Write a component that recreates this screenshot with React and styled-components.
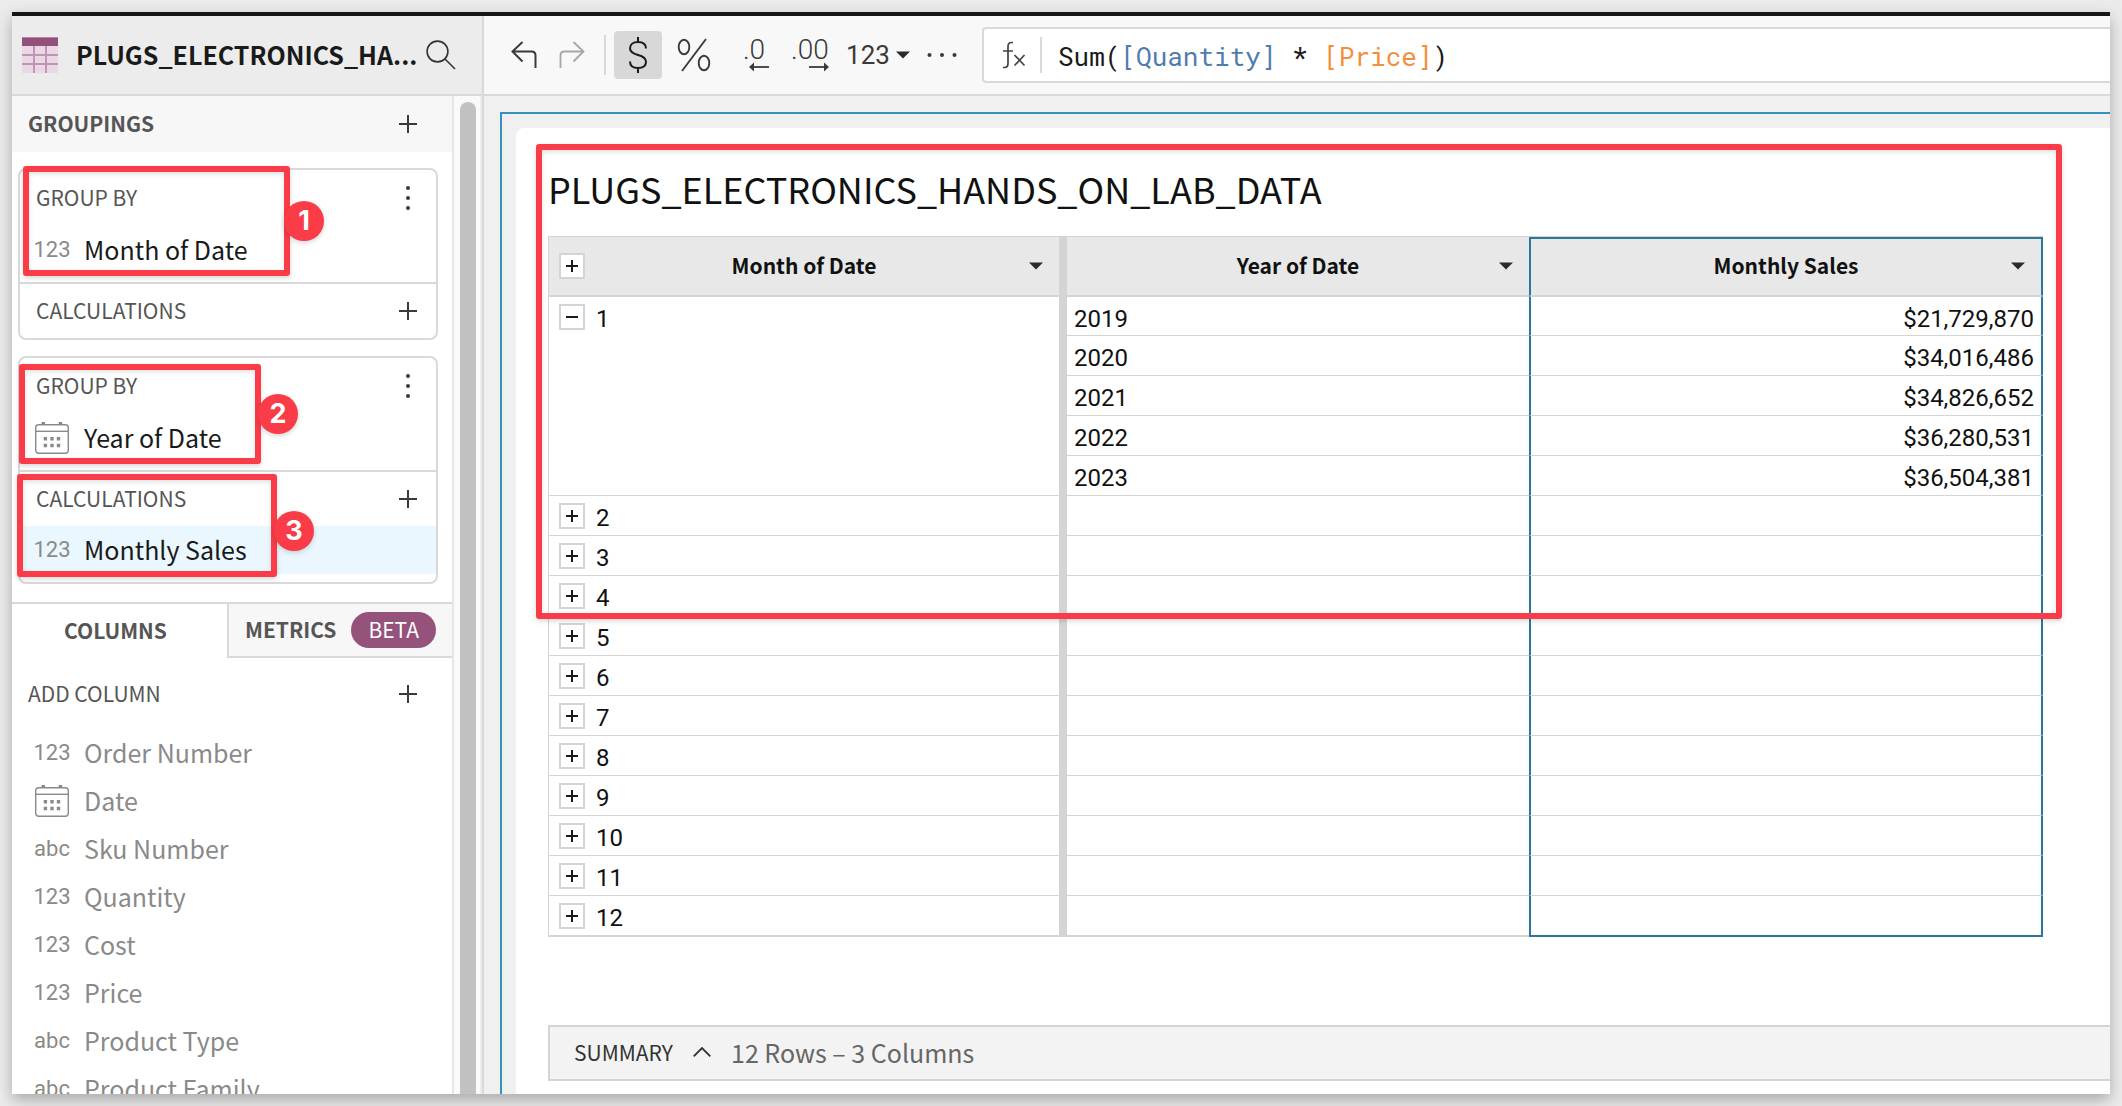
import React from "react";
import styled, { createGlobalStyle } from "styled-components";

const sans = `"Noto Sans CJK JP", "Noto Sans CJK SC", "Noto Sans", sans-serif`;
const numeric = `Roboto, "Liberation Sans", sans-serif`;
const mono = `"Roboto Mono", "Liberation Mono", monospace`;
const line = "#d9d9d9";
const accent = "#92517a";
const callout = "#f93c47";
const selection = "#2a7799";

const GlobalStyle = createGlobalStyle`
  *, *::before, *::after { box-sizing: border-box; }
  body { margin: 0; background: #ebebeb; font-family: ${sans}; color: #1a1a1a; }
  button { margin: 0; padding: 0; border: 0; background: none; color: inherit; font: inherit; }
  h1, h2, h3, ul { margin: 0; padding: 0; font: inherit; list-style: none; }
  svg { display: block; flex: none; }
`;

const Page = styled.div`
  height: 100vh;
  padding: 12px;
  overflow: hidden;
`;

const Frame = styled.div`
  display: flex;
  height: 100%;
  border-top: 4px solid #161616;
  background: #fff;
  box-shadow: 0 6px 14px rgba(0, 0, 0, 0.28);
`;

/* Sidebar */

const Sidebar = styled.aside`
  display: flex;
  flex-direction: column;
  flex: none;
  width: 472px;
  border-right: 2px solid ${line};
  overflow: hidden;
`;

const SidebarHeader = styled.header`
  display: flex;
  align-items: center;
  flex: none;
  gap: 18px;
  height: 80px;
  padding-left: 10px;
  border-bottom: 2px solid ${line};
  background: #ececec;
`;

const SourceName = styled.h2`
  width: 332px;
  padding-bottom: 2px;
  font-size: 25px;
  font-weight: 600;
  line-height: 36px;
  white-space: nowrap;
`;

const SidebarBody = styled.div`
  display: flex;
  flex: 1;
  min-height: 0;
`;

const SidebarContent = styled.div`
  flex: 1;
  min-width: 0;
  overflow: hidden;
  border-right: 2px solid #e6e6e6;
`;

const ScrollTrack = styled.div`
  flex: none;
  width: 28px;
  padding: 6px 4px 0 6px;
  border-right: 2px solid #ebebeb;
  background: #fafafa;
`;

const ScrollThumb = styled.div`
  height: 100%;
  border-radius: 8px 8px 0 0;
  background: #c1c1c1;
`;

const SectionBar = styled.div`
  display: flex;
  align-items: center;
  justify-content: space-between;
  height: 56px;
  padding: 0 35px 0 16px;
  margin-top: ${(p) => (p.$spaced ? "8px" : "0")};
  background: ${(p) => (p.$shaded ? "#f7f7f7" : "transparent")};
`;

const SectionTitle = styled.h3`
  padding-bottom: 2px;
  color: #555;
  font-size: 21px;
  font-weight: ${(p) => (p.$strong ? 600 : 400)};
  line-height: 32px;
`;

const Groups = styled.div`
  display: grid;
  gap: 16px;
  padding: 16px 14px 18px 6px;
`;

const Card = styled.section`
  position: relative;
  border: 2px solid ${line};
  border-radius: 8px;
`;

const CardPart = styled.div`
  padding-bottom: ${(p) => (p.$filled ? "8px" : "0")};

  & + & {
    border-top: 2px solid ${line};
  }
`;

const CardHeading = styled.div`
  display: flex;
  align-items: center;
  justify-content: space-between;
  height: ${(p) => (p.$tall ? "56px" : "54px")};
  padding: 0 19px 0 16px;
`;

const ColumnList = styled.ul`
  padding-top: 7px;
`;

const Field = styled.li`
  display: flex;
  align-items: center;
  gap: 14px;
  height: 48px;
  padding: 0 0 2px ${(p) => (p.$inset ? "14px" : "22px")};
  background: ${(p) => (p.$selected ? "#ebf7fe" : "transparent")};
  color: ${(p) => (p.$muted ? "#8a8a8a" : "#1a1a1a")};
  font-size: 25px;
  line-height: 36px;
`;

const TypeMark = styled.span`
  display: flex;
  justify-content: center;
  flex: none;
  width: 36px;
  padding-top: 2px;
  color: #8a8a8a;
  font-family: ${numeric};
  font-size: 22px;
  line-height: 28px;
`;

const IconButton = styled.button`
  display: flex;
  align-items: center;
  justify-content: center;
  flex: none;
  width: ${(p) => p.$width || 18}px;
  height: 32px;
  color: #3a3a3a;
`;

const Tabs = styled.div`
  display: flex;
  height: 56px;
  border-top: 2px solid ${line};
`;

const Tab = styled.button`
  display: flex;
  align-items: center;
  justify-content: ${(p) => (p.$active ? "center" : "space-between")};
  flex: ${(p) => (p.$active ? "1" : "none")};
  width: ${(p) => (p.$active ? "auto" : "225px")};
  border: solid ${line};
  border-width: ${(p) => (p.$active ? "0" : "0 0 2px 2px")};
  padding: ${(p) => (p.$active ? "0 8px 0 0" : "0 16px")};
  background: ${(p) => (p.$active ? "#fff" : "#f7f7f7")};
  color: #555;
  font-size: 21px;
  font-weight: 600;
  line-height: 32px;
`;

const TabLabel = styled.span`
  padding-bottom: 2px;
`;

const Pill = styled.span`
  height: 36px;
  padding: 0 17px;
  border-radius: 18px;
  background: #95527b;
  color: #fff;
  font-weight: 400;
  line-height: 34px;
`;

/* Numbered callouts that sit over the content */

const CalloutBox = styled.div`
  position: absolute;
  z-index: 1;
  left: ${(p) => p.$left}px;
  top: ${(p) => p.$top}px;
  right: ${(p) => (p.$right === undefined ? "auto" : `${p.$right}px`)};
  width: ${(p) => (p.$width === undefined ? "auto" : `${p.$width}px`)};
  height: ${(p) => p.$height}px;
  border: 6px solid ${callout};
  border-radius: 3px;
  box-shadow: 0 2px 5px rgba(0, 0, 0, 0.16), inset 0 2px 5px rgba(0, 0, 0, 0.12);
  pointer-events: none;
`;

const CalloutBadge = styled.span`
  position: absolute;
  z-index: 1;
  left: ${(p) => p.$left}px;
  top: ${(p) => p.$top}px;
  width: 40px;
  height: 40px;
  border-radius: 50%;
  background: ${callout};
  box-shadow: 0 2px 5px rgba(0, 0, 0, 0.16);
  color: #fff;
  font-family: Inter, "Liberation Sans", sans-serif;
  font-size: 27px;
  font-weight: 700;
  line-height: 39px;
  text-align: center;
`;

/* Workspace */

const Workspace = styled.main`
  display: flex;
  flex-direction: column;
  flex: 1;
  min-width: 0;
  overflow: hidden;
`;

const Toolbar = styled.div`
  display: flex;
  align-items: center;
  flex: none;
  height: 80px;
  padding-left: 24px;
  border-bottom: 2px solid ${line};
  background: #f8f8f8;
`;

const ToolButton = styled.button`
  display: flex;
  align-items: center;
  justify-content: center;
  flex: none;
  gap: 6px;
  width: ${(p) => p.$width || 48}px;
  height: 48px;
  border-radius: 4px;
  background: ${(p) => (p.$active ? "#d8d8d8" : "transparent")};
  color: ${(p) => (p.$faded ? "#a6a6a6" : "#3a3a3a")};
  font-family: ${numeric};
  font-size: 26px;
  line-height: 32px;
`;

const ToolDivider = styled.div`
  flex: none;
  width: 2px;
  height: 40px;
  margin-right: 8px;
  background: ${line};
`;

const Decimals = styled.span`
  display: flex;
  flex-direction: column;
  height: 36px;
  font-size: 28px;
  font-weight: 300;
  line-height: 25px;

  & > svg {
    margin-left: ${(p) => (p.$wide ? "18px" : "10px")};
  }
`;

const FormulaBar = styled.div`
  display: flex;
  align-items: center;
  flex: 1;
  min-width: 0;
  height: 56px;
  margin-left: 16px;
  padding-left: 18px;
  border: solid ${line};
  border-width: 2px 0 2px 2px;
  border-radius: 4px 0 0 4px;
  background: #fff;
`;

const FormulaDivider = styled.div`
  flex: none;
  width: 2px;
  height: 36px;
  margin: 0 16px 0 14px;
  background: ${line};
`;

const Formula = styled.div`
  flex: 1;
  min-width: 0;
  padding-top: 2px;
  font-family: ${mono};
  font-size: 26px;
  line-height: 36px;
  white-space: pre;
  outline: none;
`;

const Reference = styled.span`
  color: ${(p) => p.$color};
`;

const Canvas = styled.div`
  display: flex;
  flex: 1;
  min-height: 0;
  padding: 16px 0 0 16px;
  background: #f0f0f0;
`;

const SelectedElement = styled.div`
  display: flex;
  flex: 1;
  min-width: 0;
  padding: 14px 0 0 14px;
  border: solid #3592bf;
  border-width: 2px 0 0 2px;
`;

const Panel = styled.section`
  position: relative;
  display: flex;
  flex-direction: column;
  flex: 1;
  min-width: 0;
  padding: 36px 0 13px 32px;
  border-radius: 8px 0 0 0;
  background: #fff;
`;

const PanelTitle = styled.h1`
  height: 72px;
  color: #111;
  font-size: 36px;
  line-height: 48px;
  white-space: nowrap;
`;

const TableArea = styled.div`
  padding-right: 67px;
`;

const DataTable = styled.table`
  width: 100%;
  table-layout: fixed;
  border: solid #d4d4d4;
  border-width: 1px 0 0 1px;
  border-spacing: 0;
  color: #111;
`;

const Column = styled.col`
  width: ${(p) => p.$width};
`;

const edges = (p) =>
  p.$kind === "year"
    ? "border-left: 8px solid #d4d4d4;"
    : p.$kind === "sales"
      ? `border-left: 2px solid ${selection}; border-right: 2px solid ${selection};`
      : "";

const HeadCell = styled.th`
  height: 59px;
  padding: ${(p) => (p.$kind === "sales" ? "0 0 2px" : "0")};
  border-bottom: 1px solid #d4d4d4;
  ${edges}
  ${(p) => (p.$kind === "sales" ? `border-top: 2px solid ${selection};` : "")}
  background: #e8e8e8;
  font-size: 21px;
  font-weight: 600;
  line-height: 32px;
`;

const HeadContent = styled.div`
  display: grid;
  grid-template-columns: 36px 1fr 36px;
  align-items: center;
  padding: 0 16px 0 10px;

  & > :last-child {
    justify-self: end;
  }
`;

const HeadLabel = styled.span`
  grid-column: 2;
  padding: 0 0 2px 6px;
  text-align: center;
`;

const Cell = styled.td`
  height: 40px;
  padding: 0 7px;
  border-bottom: 1px solid #d4d4d4;
  ${edges}
  font-family: ${numeric};
  font-size: 24px;
  line-height: 32px;
  text-align: ${(p) => (p.$kind === "sales" ? "right" : "left")};
  vertical-align: top;

  tbody tr:first-child & {
    border-top: 1px solid #d4d4d4;
  }

  tbody tr:last-child & {
    height: 41px;
    border-bottom: 2px solid ${(p) => (p.$kind === "sales" ? selection : "#d4d4d4")};
  }
`;

const CellText = styled.div`
  display: flex;
  align-items: center;
  justify-content: ${(p) => (p.$end ? "flex-end" : "flex-start")};
  gap: 11px;
  height: 38px;
  padding: 2px 0 0 ${(p) => (p.$group ? "3px" : "0")};
`;

const CellValue = styled.span`
  padding-top: 4px;
`;

const ExpandButton = styled.button`
  display: flex;
  align-items: center;
  justify-content: center;
  flex: none;
  width: 26px;
  height: 26px;
  border: 2px solid #d4d4d4;
  background: #fff;
  color: #1a1a1a;
`;

const Summary = styled.footer`
  display: flex;
  align-items: center;
  flex: none;
  gap: 20px;
  height: 56px;
  margin-top: auto;
  padding: 0 0 2px 24px;
  border: solid #d4d4d4;
  border-width: 2px 0 2px 2px;
  background: #f3f3f3;
`;

const SummaryToggle = styled.button`
  display: flex;
  align-items: center;
  gap: 20px;
  color: #333;
  font-size: 21px;
  line-height: 32px;
`;

const SummaryText = styled.span`
  color: #666;
  font-size: 25px;
  line-height: 36px;
`;

/* Icons */

const TableIcon = () => (
  <svg width="36" height="36" viewBox="0 0 36 36">
    <rect width="36" height="36" fill="#ead9e4" />
    <path d="M12 9v27M24 9v27M0 18h36M0 27h36" stroke="#c094b4" strokeWidth="2" />
    <rect width="36" height="9" fill={accent} />
    <path d="M0 .5h36" stroke="#b483a3" />
  </svg>
);

const SearchIcon = () => (
  <svg width="30" height="30" viewBox="0 0 30 30" fill="none" stroke="#333" strokeWidth="1.6">
    <circle cx="11.5" cy="11.5" r="10.4" />
    <path d="M19 19l10 10" />
  </svg>
);

const PlusIcon = ({ size = 18 }) => (
  <svg width={size} height={size} viewBox={`0 0 ${size} ${size}`} stroke="currentColor" strokeWidth="2">
    <path d={`M0 ${size / 2}h${size}M${size / 2} 0v${size}`} />
  </svg>
);

const MinusIcon = () => (
  <svg width="12" height="12" viewBox="0 0 12 12" stroke="currentColor" strokeWidth="2">
    <path d="M0 6h12" />
  </svg>
);

const KebabIcon = () => (
  <svg width="4" height="24" viewBox="0 0 4 24" fill="currentColor">
    <circle cx="2" cy="2" r="2" />
    <circle cx="2" cy="12" r="2" />
    <circle cx="2" cy="22" r="2" />
  </svg>
);

const CalendarIcon = () => (
  <svg width="34" height="32" viewBox="0 0 34 32" fill="none" stroke="#8a8a8a">
    <rect x=".7" y="2.7" width="32.6" height="28.6" rx="3" strokeWidth="1.4" />
    <path d="M1 9.3h32" strokeWidth="1.4" />
    <path d="M6.5 1.3h3.5M23.7 1.3h3.5" strokeWidth="2.6" />
    <path
      d="M8.7 16.8h3.4M15.3 16.8h3.4M21.8 16.8h3.4M8.7 23.5h3.4M15.3 23.5h3.4M21.8 23.5h3.4"
      strokeWidth="3.4"
    />
  </svg>
);

const UndoIcon = ({ flip }) => (
  <svg
    width="26"
    height="28"
    viewBox="0 0 26 28"
    fill="none"
    stroke="currentColor"
    strokeWidth={flip ? 1.8 : 2}
    transform={flip ? "scale(-1 1)" : undefined}
  >
    <path d="M11.5 1L1.5 10.500L11.5 20.500M1.5 10.500H20.5Q24.5 10.500 24.5 14.500V27" />
  </svg>
);

const CurrencyIcon = () => (
  <svg width="20" height="36" viewBox="0 0 20 36" fill="none" stroke="#1a1a1a" strokeWidth="2">
    <path d="M10 0v5M10 31v5M18 11.500C18 7 15 5 10 5S2 7.500 2 11.300C2 15.500 5.500 16.800 10 18S18 20.700 18 24.800C18 29 15 31 10 31S2 29 2 24.500" />
  </svg>
);

const PercentIcon = () => (
  <svg width="34" height="34" viewBox="0 0 34 34" fill="none" stroke="currentColor" strokeWidth="1.9">
    <ellipse cx="7" cy="9" rx="5.3" ry="7.3" />
    <ellipse cx="27" cy="25" rx="5.3" ry="7.3" />
    <path d="M29 1L5 33" />
  </svg>
);

const ShiftArrow = ({ right }) => (
  <svg width="20" height="10" viewBox="0 0 20 10" transform={right ? "scale(-1 1)" : undefined}>
    <path d="M4 5h16" stroke="currentColor" strokeWidth="1.8" />
    <path d="M0 5l5-4.500v9z" fill="currentColor" />
  </svg>
);

const Caret = () => (
  <svg width="14" height="8" viewBox="0 0 14 8" fill="#2a2a2a">
    <path d="M0 .5h14L7 7.500z" />
  </svg>
);

const MoreIcon = () => (
  <svg width="30" height="4" viewBox="0 0 30 4" fill="currentColor">
    <circle cx="2.500" cy="2" r="2" />
    <circle cx="15" cy="2" r="2" />
    <circle cx="27.500" cy="2" r="2" />
  </svg>
);

const FunctionIcon = () => (
  <svg width="24" height="28" viewBox="0 0 24 28" fill="none" stroke="#444" strokeWidth="1.7">
    <path d="M11 1.500H9.500Q6 1.500 6 5.500V22.500Q6 26.500 2.500 26.500H1M1 10H11" />
    <path d="M12.500 14L22.500 24.500M22.500 14L12.500 24.500" />
  </svg>
);

const ChevronUp = () => (
  <svg width="18" height="10" viewBox="0 0 18 10" fill="none" stroke="#333" strokeWidth="1.8">
    <path d="M.7 9.300L9 1L17.300 9.300" />
  </svg>
);

/* Data */

const columns = [
  ["123", "Order Number"],
  ["date", "Date"],
  ["abc", "Sku Number"],
  ["123", "Quantity"],
  ["123", "Cost"],
  ["123", "Price"],
  ["abc", "Product Type"],
  ["abc", "Product Family"],
];

const years = [
  ["2019", "$21,729,870"],
  ["2020", "$34,016,486"],
  ["2021", "$34,826,652"],
  ["2022", "$36,280,531"],
  ["2023", "$36,504,381"],
];

const months = [2, 3, 4, 5, 6, 7, 8, 9, 10, 11, 12];

const FieldRow = ({ type, name, ...rest }) => (
  <Field {...rest}>
    <TypeMark>{type === "date" ? <CalendarIcon /> : type}</TypeMark>
    {name}
  </Field>
);

const Group = ({ field, calculation, children }) => (
  <Card>
    <CardPart $filled>
      <CardHeading $tall>
        <SectionTitle>GROUP BY</SectionTitle>
        <IconButton aria-label="Grouping options">
          <KebabIcon />
        </IconButton>
      </CardHeading>
      <ul>
        <FieldRow type={field[0]} name={field[1]} $inset />
      </ul>
    </CardPart>
    <CardPart $filled={Boolean(calculation)}>
      <CardHeading>
        <SectionTitle>CALCULATIONS</SectionTitle>
        <IconButton aria-label="Add calculation">
          <PlusIcon />
        </IconButton>
      </CardHeading>
      {calculation && (
        <ul>
          <FieldRow type={calculation[0]} name={calculation[1]} $inset $selected />
        </ul>
      )}
    </CardPart>
    {children}
  </Card>
);

const MonthCell = ({ month, open, rowSpan }) => (
  <Cell $kind="month" rowSpan={rowSpan}>
    <CellText $group>
      <ExpandButton aria-label={open ? "Collapse" : "Expand"}>
        {open ? <MinusIcon /> : <PlusIcon size={12} />}
      </ExpandButton>
      <CellValue>{month}</CellValue>
    </CellText>
  </Cell>
);

const Heading = ({ kind, label, expandable }) => (
  <HeadCell $kind={kind} scope="col">
    <HeadContent>
      {expandable && (
        <ExpandButton aria-label="Expand all">
          <PlusIcon size={12} />
        </ExpandButton>
      )}
      <HeadLabel>{label}</HeadLabel>
      <IconButton $width={14} aria-label={`${label} menu`}>
        <Caret />
      </IconButton>
    </HeadContent>
  </HeadCell>
);

export default function App() {
  return (
    <Page lang="en">
      <GlobalStyle />
      <Frame>
        <Sidebar>
          <SidebarHeader>
            <TableIcon />
            <SourceName>PLUGS_ELECTRONICS_HA...</SourceName>
            <IconButton $width={30} aria-label="Search">
              <SearchIcon />
            </IconButton>
          </SidebarHeader>
          <SidebarBody>
            <SidebarContent>
              <SectionBar $shaded>
                <SectionTitle $strong>GROUPINGS</SectionTitle>
                <IconButton aria-label="Add grouping">
                  <PlusIcon />
                </IconButton>
              </SectionBar>
              <Groups>
                <Group field={["123", "Month of Date"]}>
                  <CalloutBox $left={3} $top={-4} $width={267} $height={110} />
                  <CalloutBadge $left={264} $top={31}>1</CalloutBadge>
                </Group>
                <Group field={["date", "Year of Date"]} calculation={["123", "Monthly Sales"]}>
                  <CalloutBox $left={-1} $top={6} $width={242} $height={100} />
                  <CalloutBadge $left={238} $top={36}>2</CalloutBadge>
                  <CalloutBox $left={-3} $top={116} $width={260} $height={103} />
                  <CalloutBadge $left={254} $top={153}>3</CalloutBadge>
                </Group>
              </Groups>
              <Tabs role="tablist">
                <Tab role="tab" aria-selected="true" $active>
                  <TabLabel>COLUMNS</TabLabel>
                </Tab>
                <Tab role="tab" aria-selected="false">
                  <TabLabel>METRICS</TabLabel>
                  <Pill>BETA</Pill>
                </Tab>
              </Tabs>
              <SectionBar $spaced>
                <SectionTitle>ADD COLUMN</SectionTitle>
                <IconButton aria-label="Add column">
                  <PlusIcon />
                </IconButton>
              </SectionBar>
              <ColumnList>
                {columns.map(([type, name]) => (
                  <FieldRow key={name} type={type} name={name} $muted />
                ))}
              </ColumnList>
            </SidebarContent>
            <ScrollTrack>
              <ScrollThumb />
            </ScrollTrack>
          </SidebarBody>
        </Sidebar>

        <Workspace>
          <Toolbar>
            <ToolButton $width={32} aria-label="Undo">
              <UndoIcon />
            </ToolButton>
            <ToolButton $width={64} $faded aria-label="Redo">
              <UndoIcon flip />
            </ToolButton>
            <ToolDivider />
            <ToolButton $active aria-label="Format as currency">
              <CurrencyIcon />
            </ToolButton>
            <ToolButton $width={64} aria-label="Format as percent">
              <PercentIcon />
            </ToolButton>
            <ToolButton $width={56} aria-label="Fewer decimal places">
              <Decimals>
                .0
                <ShiftArrow />
              </Decimals>
            </ToolButton>
            <ToolButton $width={56} aria-label="More decimal places">
              <Decimals $wide>
                .00
                <ShiftArrow right />
              </Decimals>
            </ToolButton>
            <ToolButton $width={80} aria-label="Number format">
              123
              <Caret />
            </ToolButton>
            <ToolButton aria-label="More">
              <MoreIcon />
            </ToolButton>
            <FormulaBar>
              <FunctionIcon />
              <FormulaDivider />
              <Formula role="textbox" aria-label="Formula" contentEditable suppressContentEditableWarning spellCheck={false}>
                Sum(<Reference $color="#4f7cac">[Quantity]</Reference>
                {" * "}
                <Reference $color="#f28e3c">[Price]</Reference>)
              </Formula>
            </FormulaBar>
          </Toolbar>

          <Canvas>
            <SelectedElement>
              <Panel>
                <PanelTitle>PLUGS_ELECTRONICS_HANDS_ON_LAB_DATA</PanelTitle>
                <TableArea>
                  <DataTable>
                    <colgroup>
                      <Column $width="510px" />
                      <Column $width="470px" />
                      <Column $width="auto" />
                    </colgroup>
                    <thead>
                      <tr>
                        <Heading kind="month" label="Month of Date" expandable />
                        <Heading kind="year" label="Year of Date" />
                        <Heading kind="sales" label="Monthly Sales" />
                      </tr>
                    </thead>
                    <tbody>
                      {years.map(([year, sales], i) => (
                        <tr key={year}>
                          {i === 0 && <MonthCell month={1} open rowSpan={years.length} />}
                          <Cell $kind="year">
                            <CellText>
                              <CellValue>{year}</CellValue>
                            </CellText>
                          </Cell>
                          <Cell $kind="sales">
                            <CellText $end>
                              <CellValue>{sales}</CellValue>
                            </CellText>
                          </Cell>
                        </tr>
                      ))}
                      {months.map((month) => (
                        <tr key={month}>
                          <MonthCell month={month} />
                          <Cell $kind="year" />
                          <Cell $kind="sales" />
                        </tr>
                      ))}
                    </tbody>
                  </DataTable>
                </TableArea>
                <Summary>
                  <SummaryToggle>
                    SUMMARY
                    <ChevronUp />
                  </SummaryToggle>
                  <SummaryText>12 Rows – 3 Columns</SummaryText>
                </Summary>
                <CalloutBox $left={20} $top={16} $right={48} $height={475} />
              </Panel>
            </SelectedElement>
          </Canvas>
        </Workspace>
      </Frame>
    </Page>
  );
}
